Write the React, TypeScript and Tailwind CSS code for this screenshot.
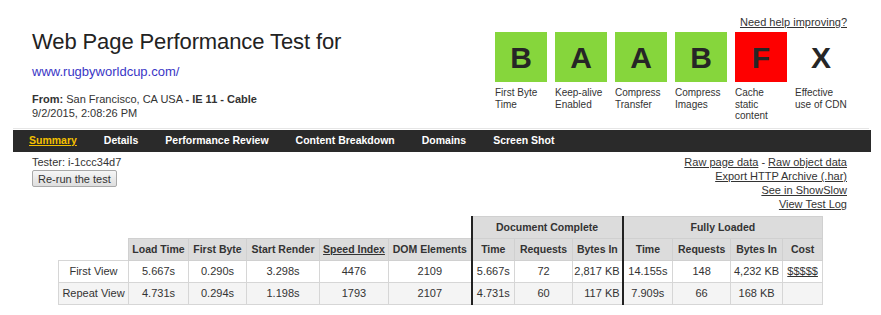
import React from "react";

const grades = [
  { letter: "B", color: "bg-[#86d63c]", label: ["First Byte", "Time"] },
  { letter: "A", color: "bg-[#86d63c]", label: ["Keep-alive", "Enabled"] },
  { letter: "A", color: "bg-[#86d63c]", label: ["Compress", "Transfer"] },
  { letter: "B", color: "bg-[#86d63c]", label: ["Compress", "Images"] },
  { letter: "F", color: "bg-[#fe0000]", label: ["Cache", "static", "content"] },
  { letter: "X", color: "bg-white", label: ["Effective", "use of CDN"] },
];

const navItems = ["Summary", "Details", "Performance Review", "Content Breakdown", "Domains", "Screen Shot"];

const rows = [
  {
    name: "First View",
    bg: "bg-white",
    cells: ["5.667s", "0.290s", "3.298s", "4476", "2109"],
    doc: ["5.667s", "72", "2,817 KB"],
    full: ["14.155s", "148", "4,232 KB"],
    cost: "$$$$$",
  },
  {
    name: "Repeat View",
    bg: "bg-[#f4f4f4]",
    cells: ["4.731s", "0.294s", "1.198s", "1793", "2107"],
    doc: ["4.731s", "60", "117 KB"],
    full: ["7.909s", "66", "168 KB"],
    cost: "",
  },
];

const th = "border border-[#d0d0d0] bg-[#dcdcdc] font-bold text-center px-0 text-[10.5px]";
const td = "border border-[#d6d6d6] text-center px-0";
const thick = "border-l-2 border-l-[#222]";

export default function App() {
  return (
    <div className="w-[881px] h-[315px] bg-white overflow-hidden text-[#333] font-['Liberation_Sans',Arial,sans-serif]">
      {/* header */}
      <div className="flex justify-between h-[128px] pl-[32px] pr-[34px]">
        <div className="pt-[29px]">
          <h1 className="text-[22px] leading-[26px] text-[#222] tracking-[-0.1px]">Web Page Performance Test for</h1>
          <a className="block mt-[9px] text-[13px] leading-[16px] text-[#3a36c6]">www.rugbyworldcup.com/</a>
          <div className="mt-[12px] text-[11px] leading-[14px]">
            <div>
              <b>From:</b> San Francisco, CA USA <b>- IE 11 - Cable</b>
            </div>
            <div>9/2/2015, 2:08:26 PM</div>
          </div>
        </div>
        <div className="pt-[16px] flex flex-col items-end">
          <a className="text-[11px] leading-[13px] underline text-[#333]">Need help improving?</a>
          <div className="mt-[3px] flex gap-[8px]">
            {grades.map((g, i) => (
              <div key={i} className="w-[52px]">
                <div
                  className={`${g.color} h-[50px] flex items-center justify-center text-[30px] font-bold text-[#262626]`}
                >
                  {g.letter}
                </div>
                <div className="mt-[5px] text-[10px] leading-[11.5px] text-[#333] whitespace-nowrap">
                  {g.label.map((l, j) => (
                    <div key={j}>{l}</div>
                  ))}
                </div>
              </div>
            ))}
          </div>
        </div>
      </div>

      {/* nav */}
      <div className="ml-[13px] w-[856px] h-[1px] bg-[#e6e6e6]" />
      <div className="ml-[13px] mt-[1px] w-[858px] h-[22px] bg-[#2a2a2a] flex items-center gap-[27px] pl-[16px] text-[10.5px] font-bold">
        {navItems.map((n, i) => (
          <a key={n} className={i === 0 ? "text-[#f5c000] underline" : "text-white"}>
            {n}
          </a>
        ))}
      </div>

      {/* info */}
      <div className="flex justify-between pl-[32px] pr-[34px] mt-[3px] text-[11px] leading-[14px]">
        <div>
          <div>Tester: i-1ccc34d7</div>
          <button className="mt-[1px] h-[17px] px-[5px] border border-[#a9a9a9] rounded-[2px] bg-gradient-to-b from-[#f6f6f6] to-[#dedede] text-[11px] leading-[14px] text-[#333]">
            Re-run the test
          </button>
        </div>
        <div className="text-right">
          <div>
            <a className="underline">Raw page data</a> - <a className="underline">Raw object data</a>
          </div>
          <div>
            <a className="underline">Export HTTP Archive (.har)</a>
          </div>
          <div>
            <a className="underline">See in ShowSlow</a>
          </div>
          <div>
            <a className="underline">View Test Log</a>
          </div>
        </div>
      </div>

      {/* results table */}
      <div className="pl-[58px] mt-[5px]">
        <table className="table-fixed border-collapse w-[764px] text-[11px] text-[#333]">
          <colgroup>
            <col className="w-[70px]" />
            <col className="w-[60px]" />
            <col className="w-[58px]" />
            <col className="w-[73px]" />
            <col className="w-[69px]" />
            <col className="w-[83px]" />
            <col className="w-[43px]" />
            <col className="w-[58px]" />
            <col className="w-[50px]" />
            <col className="w-[50px]" />
            <col className="w-[58px]" />
            <col className="w-[52px]" />
            <col className="w-[40px]" />
          </colgroup>
          <tbody>
            <tr className="h-[22px]">
              <td colSpan={6} />
              <td colSpan={3} className={`${th} ${thick}`}>
                Document Complete
              </td>
              <td colSpan={4} className={`${th} ${thick}`}>
                Fully Loaded
              </td>
            </tr>
            <tr className="h-[22px]">
              <td />
              <td className={th}>Load Time</td>
              <td className={th}>First Byte</td>
              <td className={th}>Start Render</td>
              <td className={th}>
                <span className="underline">Speed Index</span>
              </td>
              <td className={th}>DOM Elements</td>
              <td className={`${th} ${thick}`}>Time</td>
              <td className={th}>Requests</td>
              <td className={th}>Bytes In</td>
              <td className={`${th} ${thick}`}>Time</td>
              <td className={th}>Requests</td>
              <td className={th}>Bytes In</td>
              <td className={th}>Cost</td>
            </tr>
            {rows.map((r) => (
              <tr key={r.name} className={`h-[22px] ${r.bg}`}>
                <td className={td}>{r.name}</td>
                {r.cells.map((c, i) => (
                  <td key={i} className={td}>
                    {c}
                  </td>
                ))}
                {r.doc.map((c, i) => (
                  <td key={"d" + i} className={`${td} ${i === 0 ? thick : ""} ${i === 2 ? "text-right pr-[2px]" : ""}`}>
                    {c}
                  </td>
                ))}
                {r.full.map((c, i) => (
                  <td key={"f" + i} className={`${td} ${i === 0 ? thick : ""}`}>
                    {c}
                  </td>
                ))}
                <td className={td}>
                  <span className="underline text-[#333]">{r.cost}</span>
                </td>
              </tr>
            ))}
          </tbody>
        </table>
      </div>
    </div>
  );
}
